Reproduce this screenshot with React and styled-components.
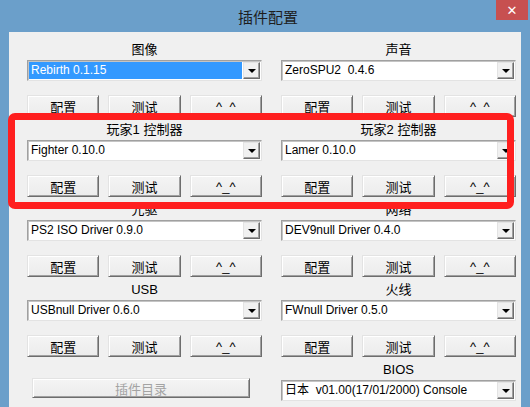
import React from "react";
import styled, { createGlobalStyle } from "styled-components";

const GlobalStyle = createGlobalStyle`
  html, body {
    margin: 0;
    padding: 0;
    background: #6b9fca;
  }
  body {
    font-family: "Liberation Sans", "Noto Sans CJK SC", sans-serif;
  }
`;

const Window = styled.div`
  position: relative;
  width: 530px;
  height: 407px;
  box-sizing: border-box;
  padding: 0 9px;
  background: #6b9fca;
  display: flex;
  flex-direction: column;
  overflow: hidden;
`;

const TitleBar = styled.div`
  height: 32px;
  flex-shrink: 0;
  display: flex;
  align-items: center;
  justify-content: center;
  padding-left: 6px;
  font-family: "Noto Sans CJK SC", sans-serif;
  font-size: 15px;
  color: #1d1d1d;
`;

const CloseButton = styled.div`
  position: absolute;
  top: 0;
  right: 2px;
  width: 32px;
  height: 20px;
  background: #c75050;
  color: #fff;
  display: flex;
  align-items: center;
  justify-content: center;
  font-family: "DejaVu Sans", sans-serif;
  font-size: 13px;
  font-weight: bold;
`;

const Body = styled.div`
  flex: 1;
  background: #f0f0f0;
  box-sizing: border-box;
  padding: 8px 5px 0 18px;
  display: grid;
  grid-template-columns: 235px 235px;
  grid-auto-rows: 80px;
  column-gap: 19px;
  align-content: start;
`;

const Section = styled.div`
  display: flex;
  flex-direction: column;
`;

const Label = styled.div`
  height: 20px;
  line-height: 20px;
  text-align: center;
  font-size: 13px;
  color: #000;
`;

const Combo = styled.div`
  height: 21px;
  box-sizing: border-box;
  display: flex;
  padding: 1px;
  background: #fff;
  border: 1px solid;
  border-color: #a0a0a0 #e3e3e3 #e3e3e3 #a0a0a0;
  box-shadow: inset 1px 1px 0 #c4c4c4;
`;

const ComboText = styled.div`
  flex: 1;
  margin-right: 1px;
  padding: 0 2px;
  line-height: 17px;
  font-size: 12px;
  white-space: pre;
  color: ${(p) => (p.$selected ? "#fff" : "#000")};
  background: ${(p) => (p.$selected ? "#3399ff" : "transparent")};
`;

const ComboArrow = styled.div`
  width: 17px;
  box-sizing: border-box;
  display: flex;
  align-items: center;
  justify-content: center;
  background: #f0f0f0;
  border: 1px solid;
  border-color: #e3e3e3 #6d6d6d #6d6d6d #e3e3e3;
  box-shadow: inset -1px -1px 0 #a0a0a0;

  &::after {
    content: "";
    border-left: 4px solid transparent;
    border-right: 4px solid transparent;
    border-top: 4px solid #000;
    margin-top: 1px;
  }
`;

const ButtonRow = styled.div`
  margin-top: 14px;
  display: grid;
  grid-template-columns: repeat(3, 1fr);
  column-gap: 9px;
`;

const Button = styled.button`
  height: ${(p) => (p.$wide ? "20px" : "22px")};
  width: ${(p) => (p.$wide ? "218px" : "auto")};
  margin: ${(p) => (p.$wide ? "18px 0 0 5px" : "0")};
  padding: 0;
  box-sizing: border-box;
  background: linear-gradient(#f4f4f4, #ececec);
  border: 1px solid;
  border-color: #e3e3e3 #6d6d6d #6d6d6d #e3e3e3;
  box-shadow: inset 1px 1px 0 #fff, inset -1px -1px 0 #a0a0a0;
  font-family: "Liberation Sans", "Noto Sans CJK SC", sans-serif;
  font-size: 13px;
  color: ${(p) => (p.disabled ? "#a3a3a3" : "#000")};
`;

const Highlight = styled.div`
  position: absolute;
  left: 8px;
  top: 113px;
  width: 506px;
  height: 96px;
  box-sizing: border-box;
  border: 7px solid #ff1f1f;
  border-radius: 7px;
  pointer-events: none;
`;

const plugins = [
  { label: "图像", value: "Rebirth 0.1.15", selected: true },
  { label: "声音", value: "ZeroSPU2  0.4.6" },
  { label: "玩家1 控制器", value: "Fighter 0.10.0" },
  { label: "玩家2 控制器", value: "Lamer 0.10.0" },
  { label: "光驱", value: "PS2 ISO Driver 0.9.0" },
  { label: "网络", value: "DEV9null Driver 0.4.0" },
  { label: "USB", value: "USBnull Driver 0.6.0" },
  { label: "火线", value: "FWnull Driver 0.5.0" },
];

const Dropdown = ({ value, selected }) => (
  <Combo>
    <ComboText $selected={selected}>{value}</ComboText>
    <ComboArrow />
  </Combo>
);

const PluginSection = ({ label, value, selected }) => (
  <Section>
    <Label>{label}</Label>
    <Dropdown value={value} selected={selected} />
    <ButtonRow>
      <Button>配置</Button>
      <Button>测试</Button>
      <Button>^_^</Button>
    </ButtonRow>
  </Section>
);

export default function App() {
  return (
    <>
      <GlobalStyle />
      <Window>
        <TitleBar>插件配置</TitleBar>
        <CloseButton>✕</CloseButton>
        <Body>
          {plugins.map((p) => (
            <PluginSection key={p.label} {...p} />
          ))}
          <Section>
            <Button $wide disabled>
              插件目录
            </Button>
          </Section>
          <Section>
            <Label>BIOS</Label>
            <Dropdown value="日本  v01.00(17/01/2000) Console" />
          </Section>
        </Body>
        <Highlight />
      </Window>
    </>
  );
}
